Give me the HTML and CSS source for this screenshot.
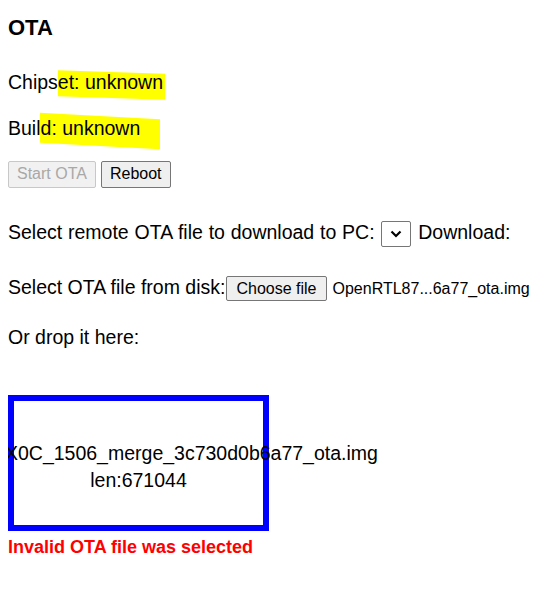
FILE: index.html
```html
<!DOCTYPE html>
<html lang="en">
<head>
    <meta charset="UTF-8">
    <meta name="viewport" content="width=device-width, initial-scale=1.0">
    <title>OTA</title>
    <link rel="stylesheet" href="styles.css">
</head>
<body>

    <h3>OTA</h3>

    <p class="info">Chips<span class="mark mark-a">et: unknown</span></p>
    <p class="info">Buil<span class="mark mark-b">d: unknown</span></p>

    <div class="actions">
        <button disabled>Start OTA</button>
        <button>Reboot</button>
    </div>

    <p class="row remote-row">Select remote OTA file to download to PC: <span class="remote"><svg width="12" height="8" viewBox="0 0 12 8"><path d="M1.5 1.5 L6 6 L10.5 1.5" fill="none" stroke="#000" stroke-width="2.2"/></svg></span> Download:</p>

    <p class="row file-row">Select OTA file from disk:<span class="file-btn">Choose file</span><span class="file-name">OpenRTL87...6a77_ota.img</span></p>

    <p class="row">Or drop it here:</p>

    <div class="drop-zone">
        <div class="drop-text">
            <div>OpenRTL87X0C_1506_merge_3c730d0b6a77_ota.img</div>
            <div>len:671044</div>
        </div>
    </div>

    <div class="error">Invalid OTA file was selected</div>

</body>
</html>
```

FILE: styles.css
```css
body {
    font-family: "Liberation Sans", Arial, sans-serif;
    font-size: 19.5px;
    margin: 8px;
    color: #000;
    background: #fff;
}
h3 {
    font-size: 22px;
    margin: 7px 0 28px;
}
p {
    margin: 0;
}
.info {
    line-height: 26px;
    margin-bottom: 20px;
}
.mark {
    position: relative;
    z-index: 0;
}
.mark::before {
    content: "";
    position: absolute;
    z-index: -1;
    background: #ffff00;
}
.mark-a::before {
    left: 0;
    right: -2px;
    top: 1px;
    bottom: -5px;
    transform: skewY(2deg);
}
.mark-b::before {
    left: -1px;
    right: -19px;
    top: -1px;
    bottom: -7px;
    transform: skewY(3deg);
}
.actions {
    display: flex;
    gap: 5px;
    margin-bottom: 31px;
}
button {
    font-family: inherit;
    font-size: 16px;
    padding: 3px 8px 4px;
    background: #efefef;
    border: 1px solid #767676;
    border-radius: 2px;
    color: #000;
}
button:disabled {
    color: #a8a8a8;
    border-color: #c8c8c8;
    background: #f1f1f1;
}
.row {
    line-height: 26px;
    margin-bottom: 30px;
}
.remote-row {
    word-spacing: 0.4px;
    margin-bottom: 27px;
}
.file-row {
    margin-bottom: 22px;
}
.remote {
    display: inline-flex;
    align-items: center;
    justify-content: center;
    width: 28px;
    height: 24px;
    border: 1px solid #767676;
    border-radius: 2px;
    vertical-align: middle;
    margin: 0 1px;
}
.file-btn {
    display: inline-block;
    font-size: 16px;
    line-height: 19px;
    padding: 2px 9px;
    margin: 0 6px 0 1px;
    background: #efefef;
    border: 1px solid #767676;
    border-radius: 2px;
    vertical-align: middle;
}
.file-name {
    font-size: 16px;
    vertical-align: middle;
}
.drop-zone {
    width: 249px;
    height: 124px;
    border: 6px solid #0000ff;
    margin-top: 45px;
    display: flex;
    align-items: center;
    justify-content: center;
}
.drop-text {
    text-align: center;
    white-space: nowrap;
    line-height: 27px;
    padding-top: 8px;
}
.error {
    color: #ff0000;
    font-weight: bold;
    font-size: 18px;
    margin-top: 6px;
}
```
